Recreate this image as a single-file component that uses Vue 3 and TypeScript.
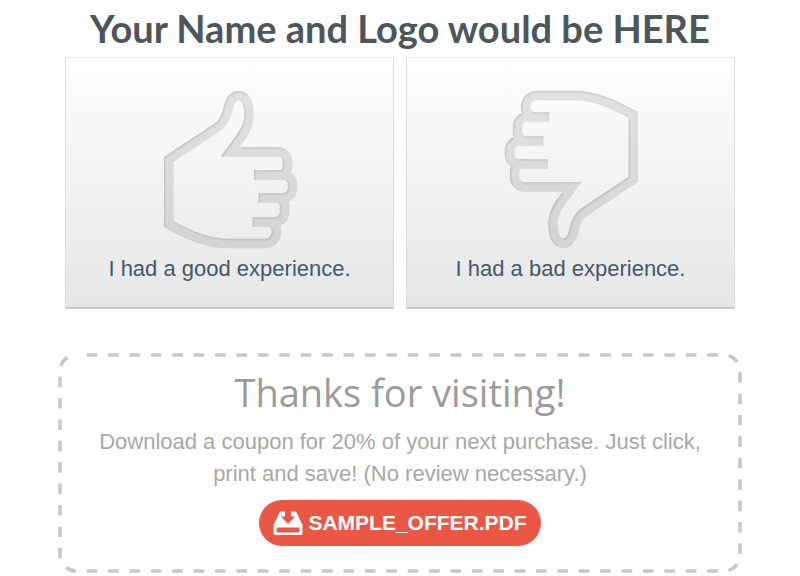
<script setup lang="ts">
interface Choice {
  id: string
  label: string
  flipped: boolean
}

const choices: Choice[] = [
  { id: 'good', label: 'I had a good experience.', flipped: false },
  { id: 'bad', label: 'I had a bad experience.', flipped: true },
]
</script>

<template>
  <main class="page">
    <h1 class="title">Your Name and Logo would be HERE</h1>

    <div class="choices">
      <button v-for="choice in choices" :key="choice.id" type="button" class="choice">
        <svg class="thumb" viewBox="12 11 135 157" aria-hidden="true">
          <defs>
            <filter :id="`inset-${choice.id}`" x="-10%" y="-10%" width="120%" height="120%" color-interpolation-filters="sRGB">
              <feFlood flood-color="#000" flood-opacity="0.1" result="tint" />
              <feComposite in="tint" in2="SourceAlpha" operator="in" result="band" />
              <feOffset in="SourceAlpha" dx="0.7" dy="1.2" result="moved" />
              <feGaussianBlur in="moved" stdDeviation="0.8" result="soft" />
              <feComposite in="SourceAlpha" in2="soft" operator="out" result="edge" />
              <feFlood flood-color="#000" flood-opacity="0.15" result="dark" />
              <feComposite in="dark" in2="edge" operator="in" result="shade" />
              <feMerge>
                <feMergeNode in="band" />
                <feMergeNode in="shade" />
              </feMerge>
            </filter>
          </defs>
          <g :filter="`url(#inset-${choice.id})`">
            <g
              :transform="choice.flipped ? 'rotate(180 80.5 89.5)' : undefined"
              fill="none"
              stroke="#000"
              stroke-width="9.5"
              stroke-miterlimit="10"
            >
              <path
                d="M104 95H129A8.500 8.500 0 0 0 137.500 86.500V82A10 10 0 0 0 127.500 72H80L91 57C96 50 99 44 99 35C99 22 95 15.700 88.500 15.700C83 15.700 80 20 78 29C76 38 73 44 67 47.500L18.700 79.500V144C38 155 58 163.500 77 163.500H115C122 163.500 126.500 158 126.500 151.500Q126.500 144 119 142"
              />
              <path d="M129 95H133A9.500 9.500 0 0 1 142.500 104.500V108.500A9.500 9.500 0 0 1 133 118H108.500" />
              <path d="M126 118A8.500 8.500 0 0 1 134.500 126.500V132.500A9.500 9.500 0 0 1 125 142H102.500" />
            </g>
          </g>
        </svg>
        <span>{{ choice.label }}</span>
      </button>
    </div>

    <section class="coupon">
      <svg class="outline" aria-hidden="true">
        <rect x="0" y="0" width="100%" height="100%" rx="16" />
      </svg>
      <h2 class="thanks">Thanks for visiting!</h2>
      <p class="offer">Download a coupon for 20% of your next purchase. Just click, print and save! (No review necessary.)</p>
      <a class="download" href="#">
        <svg class="tray" viewBox="0 0 30 24" aria-hidden="true">
          <path
            fill="#fff"
            fill-rule="evenodd"
            d="M7 .5H12V5.500H8L15 13L22 5.500H18V.5H23L29.500 14V22Q29.500 24 27.500 24H2.500Q.5 24 .5 22V14ZM3.500 16.500V20.500Q3.500 21.500 4.500 21.500H25.500Q26.500 21.500 26.500 20.500V16.500Z"
          />
        </svg>
        <span>SAMPLE_OFFER.PDF</span>
      </a>
    </section>
  </main>
</template>

<style>
body {
  margin: 0;
  background: #fff;
}
</style>

<style scoped>
.page {
  padding: 0 58px 5px;
  font-family: "Liberation Sans", Arial, sans-serif;
}
.title {
  margin: 0;
  padding: 6px 0 7px;
  font-family: Lato, sans-serif;
  font-size: 38px;
  line-height: 44px;
  font-weight: 700;
  text-align: center;
  white-space: nowrap;
  color: #4d565b;
}
.choices {
  display: grid;
  grid-template-columns: 1fr 1fr;
  gap: 12px;
  padding: 0 7px;
}
.choice {
  display: flex;
  flex-direction: column;
  align-items: center;
  gap: 6px;
  padding: 33px 8px 24px;
  border: 1px solid #dcdcdc;
  border-top-color: #ececec;
  border-bottom: 2px solid #c8c8c8;
  border-radius: 1px;
  background: linear-gradient(#fff, #e6e6e6);
  font: inherit;
  font-size: 22px;
  line-height: 29px;
  color: #475866;
  cursor: pointer;
}
.thumb {
  width: 135px;
  height: 157px;
  overflow: visible;
}
.coupon {
  position: relative;
  display: flex;
  flex-direction: column;
  align-items: center;
  margin: 46px 2px 0;
  padding: 10px 24px 25px;
  text-align: center;
}
.outline {
  position: absolute;
  inset: 0;
  width: 100%;
  height: 100%;
  overflow: visible;
  pointer-events: none;
}
.outline rect {
  fill: none;
  stroke: #c8c8c8;
  stroke-width: 3.5px;
  stroke-dasharray: 10.6 10.8;
  stroke-dashoffset: -10.7px;
}
.thanks {
  margin: 0;
  font-family: "Open Sans", sans-serif;
  font-size: 38px;
  line-height: 54px;
  font-weight: 400;
  color: #9b9b9b;
}
.offer {
  margin: 7px 0 10px;
  font-size: 22px;
  line-height: 32px;
  color: #a8a8a8;
}
.download {
  display: flex;
  align-items: center;
  gap: 5px;
  height: 46px;
  padding: 0 14px;
  border-radius: 23px;
  background: #ea5744;
  color: #fff;
  font-size: 21px;
  font-weight: 700;
  text-decoration: none;
}
.tray {
  width: 30px;
  height: 24px;
}
</style>
